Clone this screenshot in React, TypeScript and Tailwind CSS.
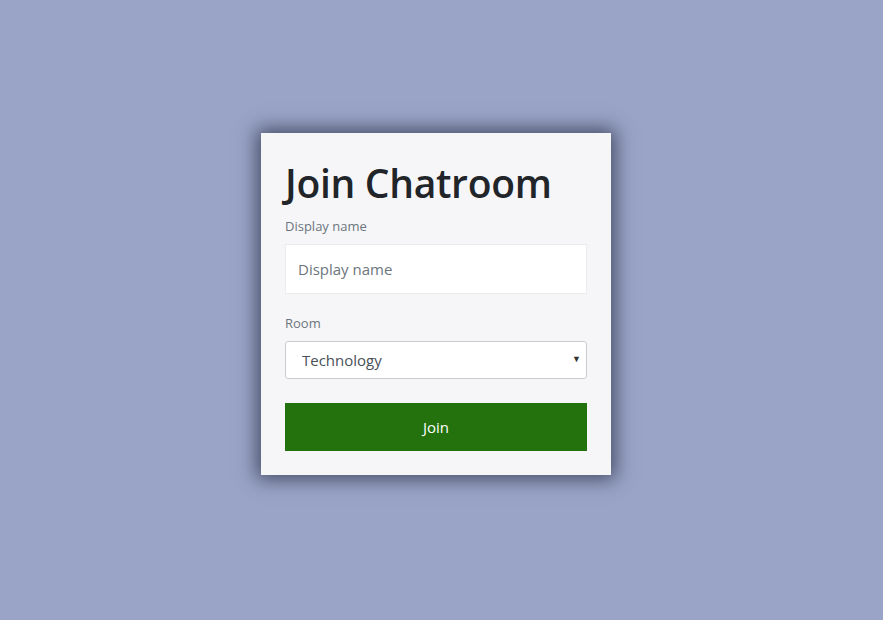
export default function App() {
  return (
    <main
      className="min-h-[620px] bg-[#99a4c6] pl-[261px] pt-[133px]"
      style={{ fontFamily: '"Open Sans", "Noto Sans", sans-serif' }}
    >
      <div className="w-[350px] bg-[#f6f6f8] px-6 pb-6 pt-[22px] shadow-[0_0_18px_4px_rgba(40,45,70,0.75)]">
        <h1 className="text-[39px] font-semibold leading-[56px] tracking-[-0.3px] text-[#212529]">
          Join Chatroom
        </h1>

        <label className="mt-[5px] block text-[13px] leading-5 text-[#6c757d]">
          Display name
        </label>
        <input
          type="text"
          placeholder="Display name"
          className="mt-2 block h-[50px] w-full border border-[#ececec] bg-white px-3 text-[15px] text-[#495057] outline-none placeholder:text-[#6c757d]"
        />

        <label className="mt-[19px] block text-[13px] leading-5 text-[#6c757d]">Room</label>
        <div className="relative mt-2">
          <select className="block h-[38px] w-full appearance-none rounded-[3px] border border-[#c9cbd1] bg-white pl-4 pr-8 text-[15px] text-[#495057] outline-none">
            <option>Technology</option>
          </select>
          <span className="pointer-events-none absolute right-[6px] top-[13px] text-[9px] leading-none text-[#333]">
            ▼
          </span>
        </div>

        <button
          type="button"
          className="mt-6 block h-12 w-full bg-[#23720d] text-[15px] text-white"
        >
          Join
        </button>
      </div>
    </main>
  );
}
